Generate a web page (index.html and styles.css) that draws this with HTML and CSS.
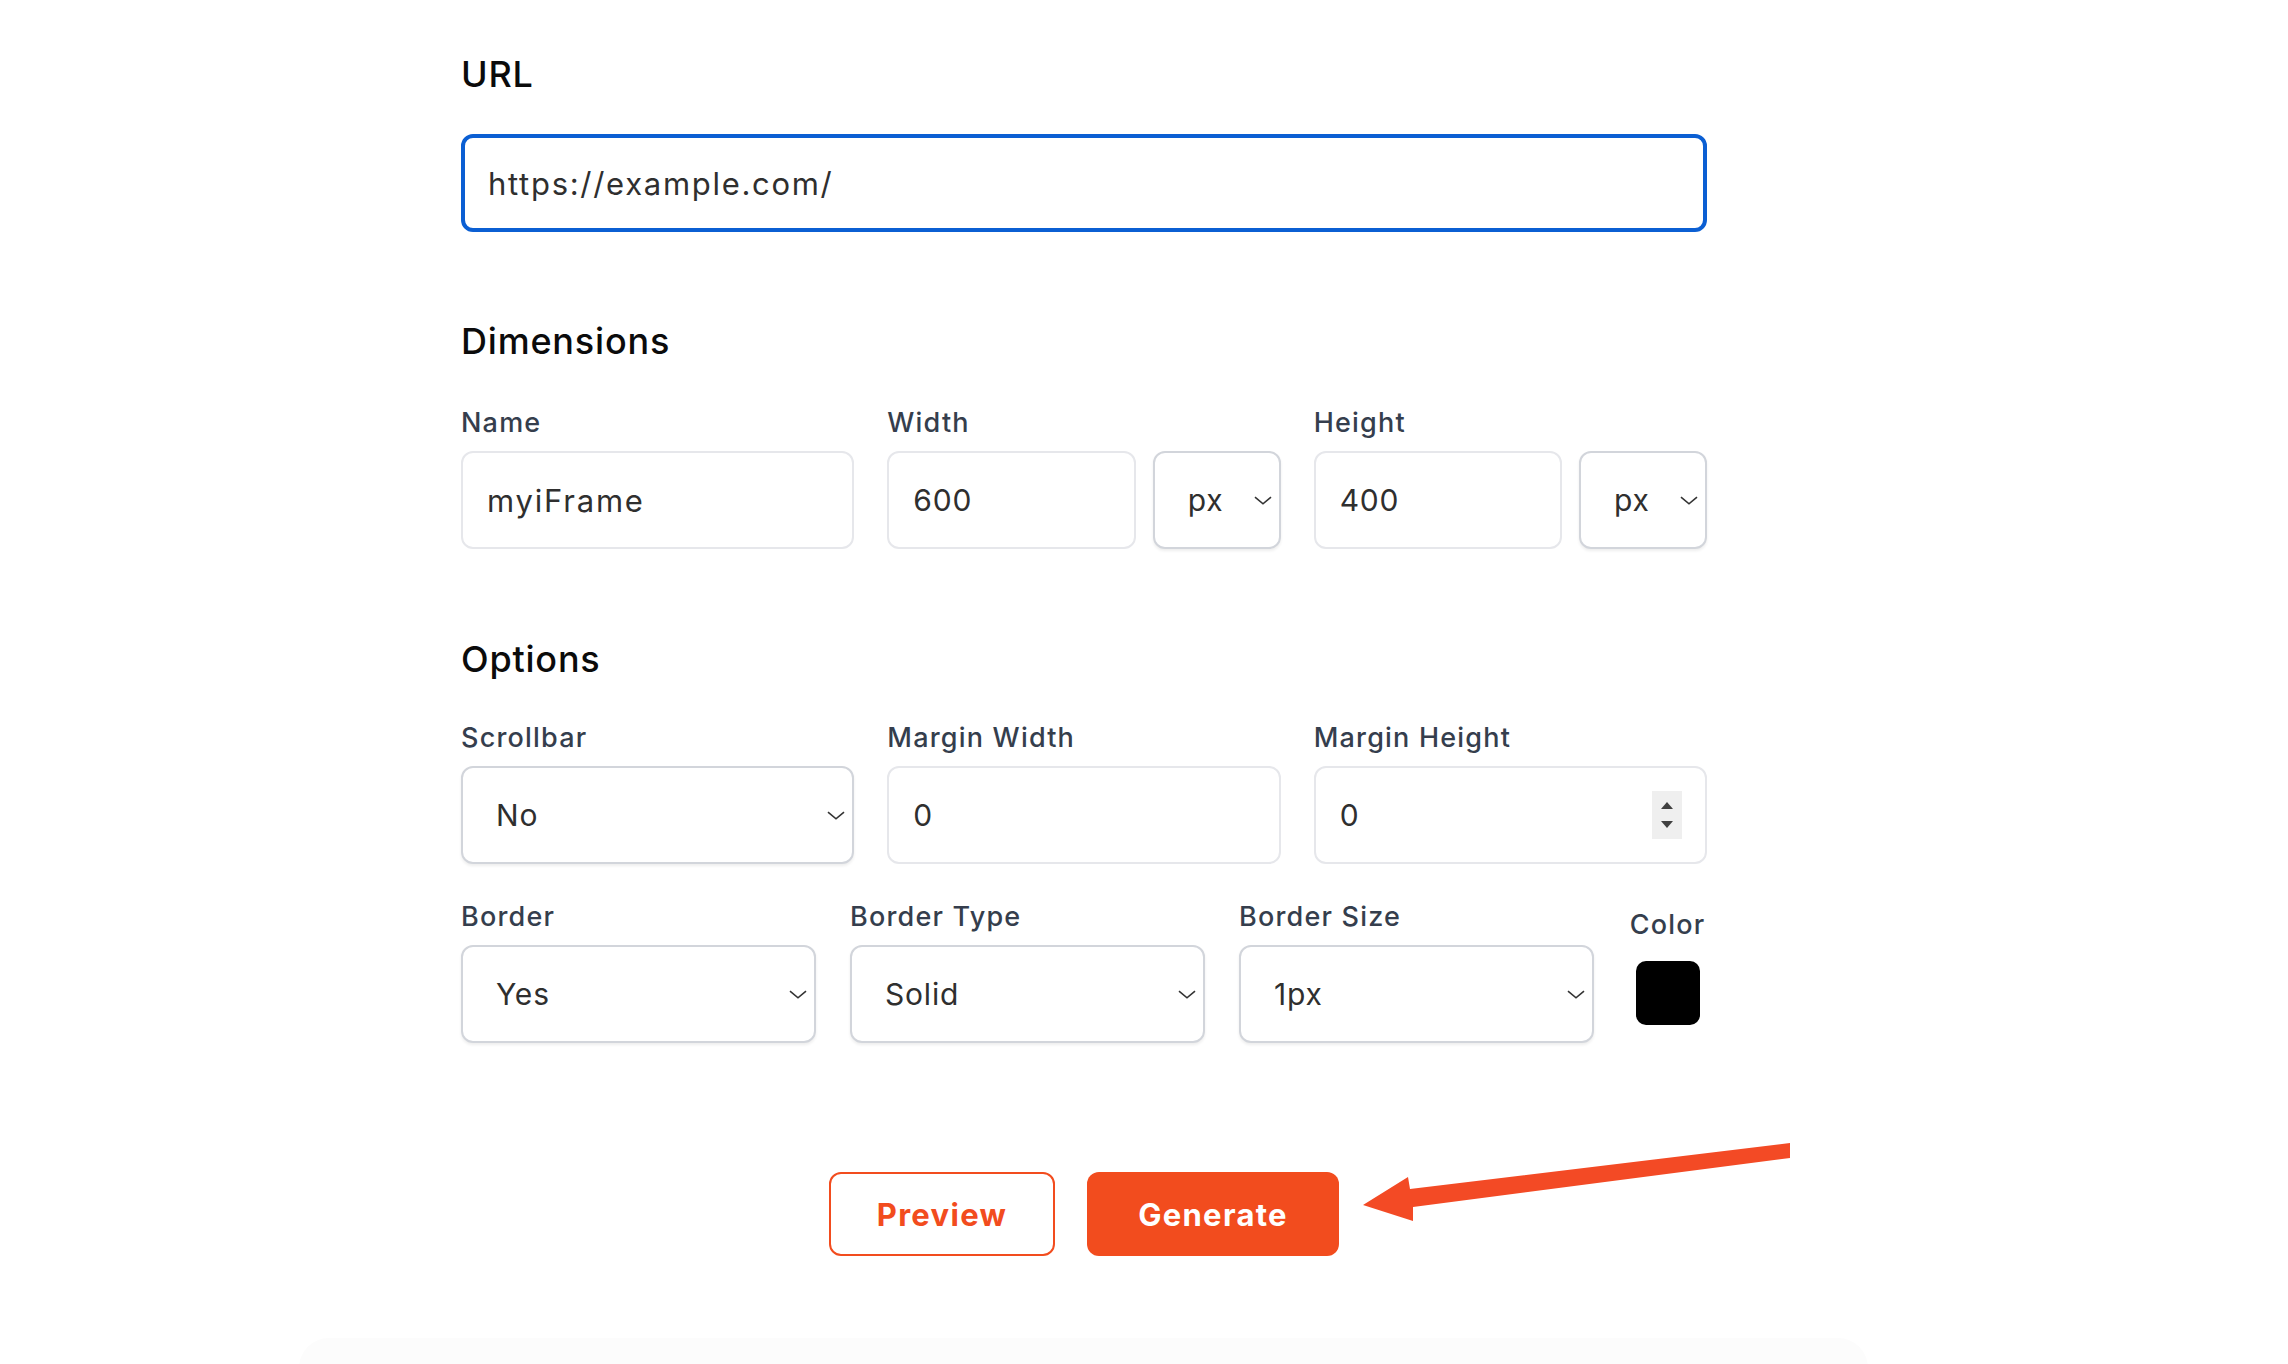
FILE: index.html
```html
<!DOCTYPE html>
<html lang="en">
<head>
<meta charset="utf-8">
<title>iFrame Generator</title>
<link rel="stylesheet" href="styles.css">
</head>
<body>
<div class="page">
  <main class="form">
    <section class="section-url">
      <h2 class="heading">URL</h2>
      <div class="url-input">https://example.com/</div>
    </section>

    <section class="section-dims">
      <h2 class="heading">Dimensions</h2>
      <div class="row3">
        <div class="field">
          <span class="label">Name</span>
          <div class="input input-text">myiFrame</div>
        </div>
        <div class="field">
          <span class="label">Width</span>
          <div class="pair">
            <div class="input">600</div>
            <div class="select select-unit">px
              <svg class="chev" viewBox="0 0 18 9" width="18" height="9"><path d="M1 1.2 L9 7.8 L17 1.2" fill="none" stroke="#333" stroke-width="1.6"/></svg>
            </div>
          </div>
        </div>
        <div class="field">
          <span class="label">Height</span>
          <div class="pair">
            <div class="input">400</div>
            <div class="select select-unit">px
              <svg class="chev" viewBox="0 0 18 9" width="18" height="9"><path d="M1 1.2 L9 7.8 L17 1.2" fill="none" stroke="#333" stroke-width="1.6"/></svg>
            </div>
          </div>
        </div>
      </div>
    </section>

    <section class="section-options">
      <h2 class="heading">Options</h2>
      <div class="row3">
        <div class="field">
          <span class="label">Scrollbar</span>
          <div class="select">No
            <svg class="chev" viewBox="0 0 18 9" width="18" height="9"><path d="M1 1.2 L9 7.8 L17 1.2" fill="none" stroke="#333" stroke-width="1.6"/></svg>
          </div>
        </div>
        <div class="field">
          <span class="label">Margin Width</span>
          <div class="input">0</div>
        </div>
        <div class="field">
          <span class="label">Margin Height</span>
          <div class="input input-number">0
            <svg class="spin" viewBox="0 0 30 48" width="30" height="48"><rect width="30" height="48" fill="#efefef"/><path d="M9 18 L15 11 L21 18 Z" fill="#404040"/><path d="M9 30 L15 37 L21 30 Z" fill="#404040"/></svg>
          </div>
        </div>
      </div>
      <div class="row-border">
        <div class="field">
          <span class="label">Border</span>
          <div class="select">Yes
            <svg class="chev" viewBox="0 0 18 9" width="18" height="9"><path d="M1 1.2 L9 7.8 L17 1.2" fill="none" stroke="#333" stroke-width="1.6"/></svg>
          </div>
        </div>
        <div class="field">
          <span class="label">Border Type</span>
          <div class="select">Solid
            <svg class="chev" viewBox="0 0 18 9" width="18" height="9"><path d="M1 1.2 L9 7.8 L17 1.2" fill="none" stroke="#333" stroke-width="1.6"/></svg>
          </div>
        </div>
        <div class="field">
          <span class="label">Border Size</span>
          <div class="select">1px
            <svg class="chev" viewBox="0 0 18 9" width="18" height="9"><path d="M1 1.2 L9 7.8 L17 1.2" fill="none" stroke="#333" stroke-width="1.6"/></svg>
          </div>
        </div>
        <div class="color-field">
          <span class="label">Color</span>
          <div class="swatch"></div>
        </div>
      </div>
    </section>

    <div class="actions">
      <button class="btn btn-outline" type="button">Preview</button>
      <button class="btn btn-primary" type="button">Generate</button>
      <svg class="arrow" viewBox="0 0 450 100" width="450" height="100">
        <polygon points="13,72 58,44 60,56 440,10 440,25 63,74 63,88" fill="#f34a25"/>
      </svg>
    </div>
  </main>
  <div class="footer-card"></div>
</div>
</body>
</html>
```

FILE: styles.css
```css
* {
  box-sizing: border-box;
  margin: 0;
  padding: 0;
}

html, body {
  background: #ffffff;
}

body {
  margin: 0;
  font-family: Inter, "Noto Sans", "Liberation Sans", sans-serif;
  color: #333333;
  overflow: hidden;
}

.page {
  width: 2288px;
  height: 1364px;
  padding-top: 52px;
}

.form {
  width: 1246px;
  margin-left: 461px;
}

.heading {
  font-size: 36px;
  line-height: 44px;
  font-weight: 500;
  color: #0b0b0b;
  letter-spacing: 0.8px;
}

.section-url .heading {
  margin-bottom: 38px;
}

.url-input {
  height: 98px;
  border: 4px solid #0b5fd3;
  border-radius: 12px;
  padding: 0 23px;
  display: flex;
  align-items: center;
  font-size: 31px;
  color: #2f2f2f;
  letter-spacing: 1.7px;
}

.section-dims {
  margin-top: 87px;
}

.section-dims .heading {
  margin-bottom: 40px;
}

.section-options {
  margin-top: 88px;
}

.section-options .heading {
  margin-bottom: 37px;
}

.label {
  display: block;
  font-size: 27px;
  line-height: 40px;
  font-weight: 500;
  color: #353e4d;
  margin-bottom: 8px;
  white-space: nowrap;
  letter-spacing: 1.2px;
}

.row3 {
  display: grid;
  grid-template-columns: repeat(3, 1fr);
  column-gap: 33px;
}

.row-border {
  display: grid;
  grid-template-columns: 1fr 1fr 1fr 79px;
  column-gap: 34px;
  margin-top: 33px;
}

.input,
.select {
  height: 98px;
  border: 2px solid #e6e7eb;
  border-radius: 12px;
  padding: 0 24px;
  display: flex;
  align-items: center;
  font-size: 30px;
  color: #2f2f2f;
  background: #ffffff;
  letter-spacing: 0.8px;
}

.input-text {
  font-size: 31px;
  letter-spacing: 1.8px;
}

.select {
  border-color: #d2d5db;
  box-shadow: 0 2px 3px rgba(0, 0, 0, 0.07);
  justify-content: space-between;
  padding: 0 7px 0 33px;
}

.select-unit {
  padding-left: 33px;
}

.chev {
  flex: none;
  display: block;
}

.input-number {
  justify-content: space-between;
  padding-right: 23px;
}

.spin {
  flex: none;
  display: block;
}

.pair {
  display: flex;
  gap: 17px;
}

.pair .input {
  flex: 1;
  min-width: 0;
}

.pair .select {
  flex: none;
  width: 128px;
}

.color-field {
  display: flex;
  flex-direction: column;
  align-items: center;
  padding-top: 8px;
}

.color-field .label {
  margin-bottom: 0;
}

.swatch {
  width: 64px;
  height: 64px;
  background: #000000;
  border-radius: 10px;
  margin-top: 16px;
}

.actions {
  position: relative;
  display: flex;
  justify-content: center;
  gap: 32px;
  margin-top: 129px;
}

.btn {
  height: 84px;
  border-radius: 12px;
  font-family: inherit;
  font-size: 31px;
  font-weight: 700;
  display: flex;
  align-items: center;
  justify-content: center;
  letter-spacing: 1.3px;
  cursor: pointer;
}

.btn-outline {
  width: 226px;
  border: 2px solid #f24c1e;
  color: #f24c1e;
  background: #ffffff;
}

.btn-primary {
  width: 252px;
  border: none;
  color: #ffffff;
  background: #f24c1e;
}

.arrow {
  position: absolute;
  left: 889px;
  top: -39px;
}

.footer-card {
  margin-top: 82px;
  margin-left: 299px;
  width: 1569px;
  height: 30px;
  border-radius: 40px 40px 0 0;
  background: #fcfcfc;
}
```
